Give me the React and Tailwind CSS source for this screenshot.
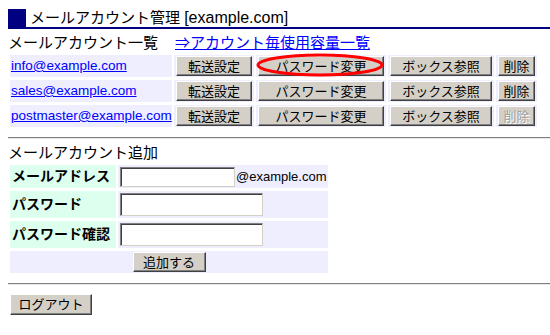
import React from "react";

const accounts = [
  { email: "info@example.com", canDelete: true, marked: true },
  { email: "sales@example.com", canDelete: true },
  { email: "postmaster@example.com", canDelete: false },
];

const Btn = ({ children, className = "", disabled }) => (
  <button
    type="button"
    disabled={disabled}
    className={`block h-[20px] bg-[#d4d0c8] border border-t-white border-l-white border-r-[#404040] border-b-[#404040] shadow-[inset_-1px_-1px_0_#808080] text-[13px] leading-none ${
      disabled ? "text-[#a0a0a0] [text-shadow:1px_1px_0_#fff]" : "text-black"
    } ${className}`}
  >
    {children}
  </button>
);

const Field = ({ className = "" }) => (
  <input
    type="text"
    className={`block bg-white border border-t-[#808080] border-l-[#808080] border-r-[#d4d0c8] border-b-[#d4d0c8] shadow-[inset_1px_1px_0_#404040] outline-none ${className}`}
  />
);

const Rule = ({ className = "" }) => (
  <div className={`mr-[-8px] border-t border-t-[#808080] border-b border-b-[#e6e6e6] ${className}`} />
);

export default function App() {
  return (
    <div className="min-h-screen bg-white px-2 pt-[9px] text-black font-['Liberation_Sans','Noto_Sans_CJK_JP',sans-serif] overflow-hidden">
      <div className="mr-[-8px] flex items-end border-b-2 border-[#000080] h-[20px]">
        <div className="w-[18px] h-[18px] bg-[#000080]" />
        <div className="ml-1 text-[15px] leading-[18px]">
          メールアカウント管理 <span className="text-[16px]">[example.com]</span>
        </div>
      </div>

      <div className="flex items-center h-[22px] mt-[3px] text-[15px]">
        <span>メールアカウント一覧</span>
        <a href="#" className="ml-[17px] text-[#0000ff] underline">
          ⇒アカウント毎使用容量一覧
        </a>
      </div>

      <div className="relative ml-[2px] mt-px grid grid-cols-[162px_80px_130px_106px_41px] gap-x-[2px] gap-y-[3px] w-max">
        {accounts.map((a) => (
          <React.Fragment key={a.email}>
            <div className="h-[22px] bg-[#eeeeff] flex items-center pl-px">
              <a href="#" className="text-[13.5px] text-[#0000ff] underline">
                {a.email}
              </a>
            </div>
            <div className="h-[22px] bg-[#eeeeff] px-[2px] py-px">
              <Btn className="w-full">転送設定</Btn>
            </div>
            <div className="relative h-[22px] bg-[#eeeeff] px-[2px] py-px">
              <Btn className="w-full">パスワード変更</Btn>
              {a.marked && (
                <svg
                  className="absolute left-0 top-[-2px] pointer-events-none"
                  width="130"
                  height="24"
                  viewBox="0 0 130 24"
                >
                  <ellipse cx="64" cy="12" rx="62" ry="10" fill="none" stroke="#ff0000" strokeWidth="3" />
                </svg>
              )}
            </div>
            <div className="h-[22px] bg-[#eeeeff] px-[2px] py-px">
              <Btn className="w-full">ボックス参照</Btn>
            </div>
            <div className="h-[22px] bg-[#eeeeff] px-[2px] py-px">
              <Btn className="w-full" disabled={!a.canDelete}>
                削除
              </Btn>
            </div>
          </React.Fragment>
        ))}
      </div>

      <Rule className="mt-[10px]" />

      <div className="h-[22px] mt-[3px] flex items-center text-[15px]">メールアカウント追加</div>

      <div className="ml-[2px] mt-px grid grid-cols-[106px_210px] gap-x-[2px] gap-y-[3px] w-max text-[13px]">
        <div className="h-[23px] bg-[#ddffee] flex items-center pl-[2px] text-[14px] font-bold">メールアドレス</div>
        <div className="h-[23px] bg-[#eeeeff] flex items-center pl-[2px]">
          <Field className="w-[115px] h-[20px]" />
          <span className="ml-px">@example.com</span>
        </div>

        <div className="h-[27px] bg-[#ddffee] flex items-center pl-[2px] text-[14px] font-bold">パスワード</div>
        <div className="h-[27px] bg-[#eeeeff] flex items-center pl-[2px]">
          <Field className="w-[143px] h-[23px]" />
        </div>

        <div className="h-[27px] bg-[#ddffee] flex items-center pl-[2px] text-[14px] font-bold">パスワード確認</div>
        <div className="h-[27px] bg-[#eeeeff] flex items-center pl-[2px]">
          <Field className="w-[143px] h-[23px]" />
        </div>

        <div className="col-span-2 h-[22px] bg-[#eeeeff] flex items-center justify-center">
          <Btn className="w-[73px]">追加する</Btn>
        </div>
      </div>

      <Rule className="mt-[10px]" />

      <div className="mt-[9px] ml-[2px] flex">
        <Btn className="w-[82px] h-[21px]">ログアウト</Btn>
      </div>
    </div>
  );
}
